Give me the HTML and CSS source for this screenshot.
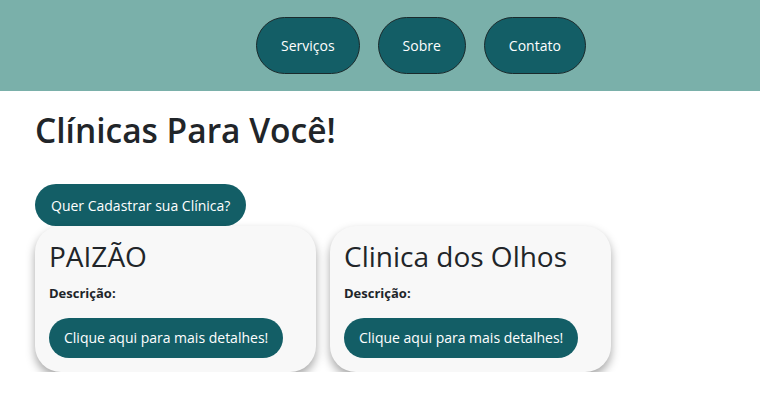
FILE: index.html
```html
<!DOCTYPE html>
<html lang="pt-BR">
<head>
<meta charset="utf-8">
<title>Clínicas</title>
<link rel="stylesheet" href="styles.css">
</head>
<body>
<header class="topbar">
  <nav class="nav">
    <a class="nav-btn" href="#">Serviços</a>
    <a class="nav-btn" href="#">Sobre</a>
    <a class="nav-btn" href="#">Contato</a>
  </nav>
</header>
<main class="content">
  <h1 class="title">Clínicas Para Você!</h1>
  <a class="btn btn-register" href="#">Quer Cadastrar sua Clínica?</a>
  <section class="cards">
    <article class="card">
      <h2 class="card-title">PAIZÃO</h2>
      <p class="card-desc">Descrição:</p>
      <a class="btn btn-card" href="#">Clique aqui para mais detalhes!</a>
    </article>
    <article class="card">
      <h2 class="card-title">Clinica dos Olhos</h2>
      <p class="card-desc">Descrição:</p>
      <a class="btn btn-card" href="#">Clique aqui para mais detalhes!</a>
    </article>
  </section>
</main>
</body>
</html>
```
FILE: styles.css
```css
* { box-sizing: border-box; }
body {
  margin: 0;
  font-family: "Open Sans", "Noto Sans", sans-serif;
  color: #212529;
  background: #fff;
}
.topbar {
  background: #7ab0aa;
  height: 91px;
  display: flex;
  align-items: center;
  padding-left: 256px;
}
.nav { display: flex; gap: 18px; }
.nav-btn {
  display: inline-flex;
  align-items: center;
  justify-content: center;
  height: 57px;
  padding: 0 24px;
  border: 1px solid #1a2a2c;
  border-radius: 30px;
  background: #135e66;
  color: #fff;
  font-size: 14px;
  text-decoration: none;
}
.content { padding: 0 35px; }
.title {
  margin: 0 0 34px;
  padding-top: 19px;
  font-size: 33.5px;
  font-weight: 600;
  line-height: 1.2;
}
.btn {
  display: inline-flex;
  align-items: center;
  justify-content: center;
  background: #135e66;
  color: #fff;
  text-decoration: none;
  font-size: 14px;
  border-radius: 21px;
}
.btn-register { height: 42px; padding: 0 16px; }
.cards { display: flex; gap: 14px; }
.card {
  width: 281px;
  background: #f8f8f8;
  border-radius: 26px;
  padding: 14px 14px 14px;
  box-shadow: 0 5px 10px rgba(0,0,0,0.35);
}
.card-title {
  margin: 0 0 10px;
  font-size: 28px;
  font-weight: 400;
  line-height: 1.2;
}
.card-desc {
  margin: 0 0 16px;
  font-size: 13px;
  font-weight: 700;
}
.btn-card { height: 40px; padding: 0 15px; border-radius: 20px; }
```
